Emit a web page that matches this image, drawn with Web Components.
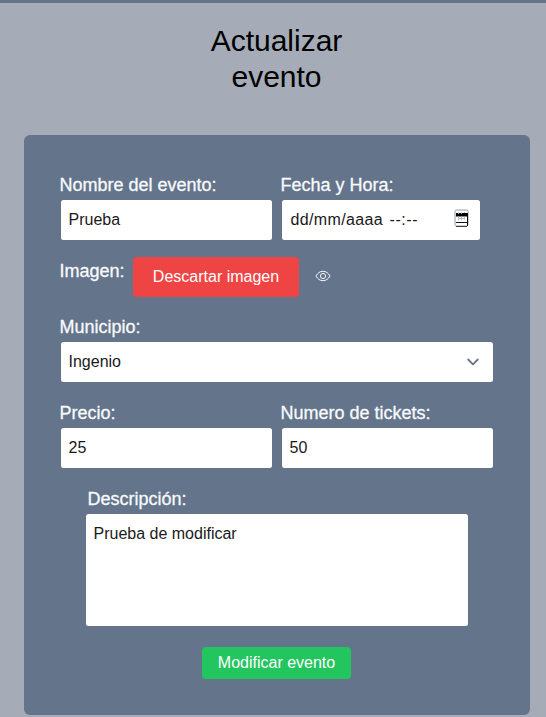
<!DOCTYPE html>
<html lang="es">
<head>
<meta charset="utf-8">
<title>Actualizar evento</title>
<style>
html, body { margin: 0; height: 100%; overflow: hidden; }
body { background: #a5abb7; font-family: "Liberation Sans", Arial, sans-serif; }
</style>
</head>
<body>
<event-page></event-page>
<script>
function define(name, html) {
  const template = document.createElement('template');
  template.innerHTML = html;
  customElements.define(name, class extends HTMLElement {
    constructor() {
      super();
      this.attachShadow({ mode: 'open' }).append(template.content.cloneNode(true));
    }
  });
}

define('page-title', `
<style>
:host { display: block; width: 150px; margin: 20px 0 40px 201.5px; text-align: center; font-size: 30px; line-height: 36px; color: #000; }
h1 { margin: 0; font: inherit; }
</style><h1><slot></slot></h1>`);

define('form-card', `
<style>
:host { display: flex; flex-direction: column; box-sizing: border-box; width: 506px; height: 580px; margin-left: 24px; padding: 36px 37px; border-radius: 6px; background: #64748b; }
</style><slot></slot>`);

define('form-row', `
<style>
:host { display: grid; grid-template-columns: 211px 211px; column-gap: 10px; margin-bottom: 17px; }
</style><slot></slot>`);

define('field-label', `
<style>
:host { display: block; height: 29px; margin-left: -1.5px; font-size: 18px; line-height: 28px; color: #f8fafc; white-space: nowrap; -webkit-text-stroke: .3px #f8fafc; }
</style><slot></slot>`);

define('text-field', `
<style>
:host { display: block; }
.box { box-sizing: border-box; display: flex; align-items: flex-start; justify-content: space-between; height: var(--h, 40px); padding: 8px 8px 8px 7.5px; border-radius: 2.5px; background: #fff; color: #1a1a1a; font-size: 16px; line-height: 24px; white-space: nowrap; }
</style><field-label><slot name="label"></slot></field-label><div class="box"><slot></slot><slot name="icon"></slot></div>`);

define('action-button', `
<style>
:host { display: block; }
button { display: block; box-sizing: border-box; width: 100%; height: 100%; padding: 0; border: 0; border-radius: 4px; background: var(--fill); color: #fff; font: 16px/24px "Liberation Sans", Arial, sans-serif; white-space: nowrap; }
</style><button type="button"><slot></slot></button>`);

define('calendar-icon', `
<style>
:host { display: block; width: 16px; height: 20px; margin-right: 3px; }
svg { display: block; }
</style>
<svg width="16" height="20" viewBox="0 0 16 20">
<rect x="2" y="2" width="13" height="16" rx="1.500" fill="#fff" stroke="#929bab"/>
<path d="M3 5h11v3.500H3z" fill="#000"/>
<path d="M5 4h1v2H5zM8 4h1v2H8zM11 4h1v1h-1z" fill="#b8bfcc"/>
<path d="M5 10.500h6M5.500 8.500v4M8.500 8.500v4M11.500 8.500v3" stroke="#b4bac6" fill="none"/>
<path d="M3 14h11v1H3zM14 5h1v13h-1zM3 18h11v.7H3z" fill="#111"/>
</svg>`);

define('chevron-icon', `
<style>
:host { display: block; width: 24px; height: 24px; }
svg { display: block; }
</style>
<svg width="24" height="24" viewBox="0 0 24 24"><path d="M7.200 9.500l4.800 4.800 4.800-4.800" fill="none" stroke="#6b7280" stroke-width="1.800" stroke-linecap="round" stroke-linejoin="round"/></svg>`);

define('eye-icon', `
<style>
:host { display: block; width: 16px; height: 16px; }
svg { display: block; }
</style>
<svg width="16" height="16" viewBox="0 0 16 16" fill="none" stroke="#f1f5f9"><path d="M1 8C2.600 5 5 3.300 8 3.300S13.400 5 15 8c-1.600 3-4 4.700-7 4.700S2.600 11 1 8z"/><circle cx="8" cy="8" r="2.600"/></svg>`);

define('event-page', `
<style>
:host { display: flow-root; box-sizing: border-box; height: 717px; border-top: 3px solid #64748b; }
.wide { grid-column: 1 / -1; }
.date { width: 198px; }
.datetext { padding-left: 1px; letter-spacing: .37px; }
.time { margin-left: 1.5px; letter-spacing: .6px; }
.image { display: flex; align-items: flex-start; height: 56px; }
.image field-label { width: 73.5px; }
.image action-button { width: 166px; height: 40px; --fill: #ef4444; }
.image eye-icon { margin: 11px 0 0 16px; }
.description { width: 382px; margin-left: 25px; --h: 112px; }
.description [slot=label] { margin-left: 3px; }
.submit { width: 149px; height: 32px; margin: 21px 0 0 141px; --fill: #22c55e; }
</style>
<page-title>Actualizar<br>evento</page-title>
<form-card>
  <form-row>
    <text-field><span slot="label">Nombre del evento:</span><span>Prueba</span></text-field>
    <text-field class="date"><span slot="label">Fecha y Hora:</span><span class="datetext">dd/mm/aaaa <span class="time">--:--</span></span><calendar-icon slot="icon"></calendar-icon></text-field>
  </form-row>
  <div class="image">
    <field-label>Imagen:</field-label>
    <action-button>Descartar imagen</action-button>
    <eye-icon></eye-icon>
  </div>
  <form-row>
    <text-field class="wide"><span slot="label">Municipio:</span><span>Ingenio</span><chevron-icon slot="icon"></chevron-icon></text-field>
  </form-row>
  <form-row>
    <text-field><span slot="label">Precio:</span><span>25</span></text-field>
    <text-field><span slot="label">Numero de tickets:</span><span>50</span></text-field>
  </form-row>
  <text-field class="description"><span slot="label">Descripción:</span><span>Prueba de modificar</span></text-field>
  <action-button class="submit">Modificar evento</action-button>
</form-card>`);
</script>
</body>
</html>
